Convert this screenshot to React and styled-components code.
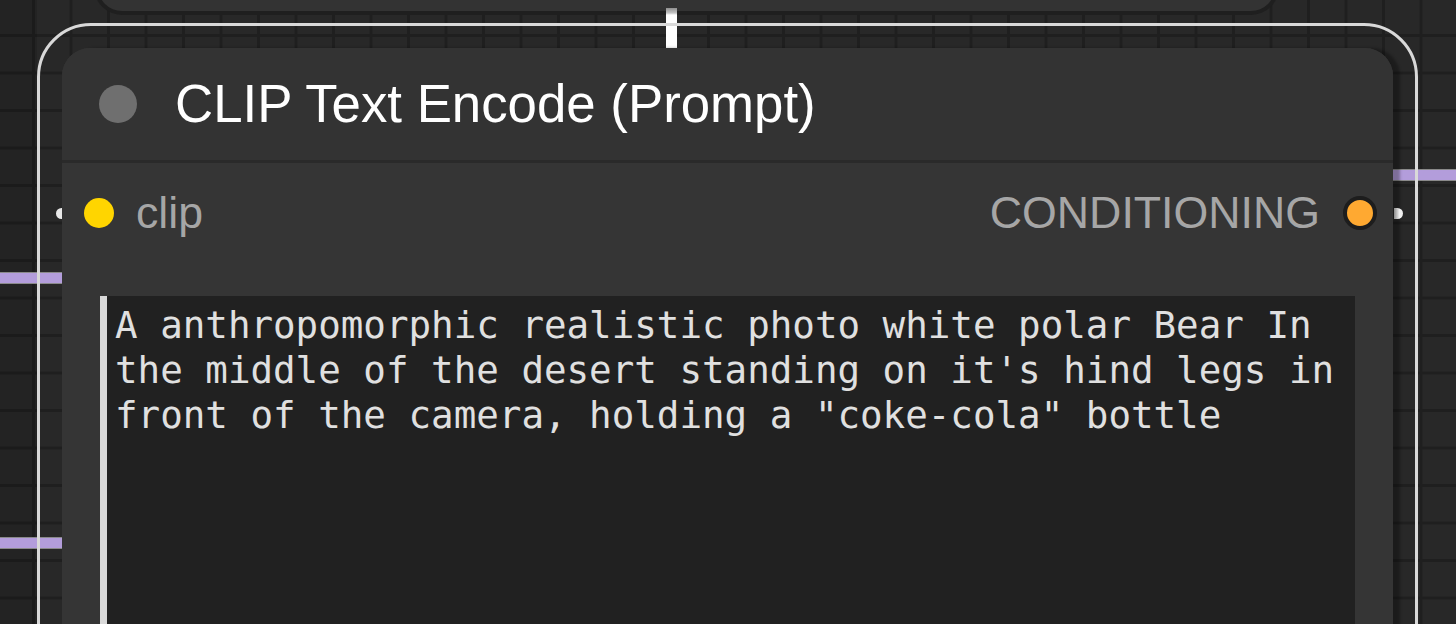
import React from "react";
import styled, { createGlobalStyle } from "styled-components";

const GlobalStyle = createGlobalStyle`
  html, body { margin: 0; padding: 0; background: #262626; }
  #root { width: 1456px; height: 624px; overflow: hidden; }
`;

const Canvas = styled.div`
  position: relative;
  width: 1456px;
  height: 624px;
  overflow: hidden;
  background-color: #282828;
  background-image:
    linear-gradient(to right, #1f1f1f 3px, transparent 3px),
    linear-gradient(to bottom, #1f1f1f 3px, transparent 3px);
  background-size: 37.5px 37.5px;
  background-position: 32px 34px;
`;

const LeftShade = styled.div`
  position: absolute;
  left: 0;
  top: 0;
  width: 37px;
  height: 624px;
  background: rgba(0, 0, 0, 0.12);
`;

const Link = styled.div`
  position: absolute;
  height: 10px;
  background: #b39ddb;
  border-top: 1px solid #8a8a8a;
  border-bottom: 1px solid #8a8a8a;
`;

const WireTop = styled.div`
  position: absolute;
  left: 666px;
  top: 8px;
  width: 11px;
  height: 40px;
  background: linear-gradient(to bottom, #8f8f8f 0px, #c4c4c4 5px, #ffffff 7px);
`;

const TopNode = styled.div`
  position: absolute;
  left: 98px;
  top: -60px;
  width: 1177px;
  height: 71px;
  border-radius: 24px;
  background: #333333;
  box-shadow: 0 0 0 4px #1f1f1f;
`;

const Outline = styled.div`
  position: absolute;
  left: 37px;
  top: 23px;
  width: 1375px;
  height: 700px;
  border: 3px solid #d9d9d9;
  border-radius: 54px;
  pointer-events: none;
`;

const Node = styled.div`
  position: absolute;
  left: 62px;
  top: 48px;
  width: 1331px;
  height: 660px;
  border-radius: 28px;
  background: #353535;
  box-shadow: 7px 0 3px rgba(0, 0, 0, 0.3);
  display: flex;
  flex-direction: column;
`;

const TitleBar = styled.div`
  height: 112px;
  display: flex;
  align-items: center;
  gap: 38px;
  padding-left: 37px;
  background: #333333;
  border-radius: 28px 28px 0 0;
  border-bottom: 3px solid #2a2a2a;
`;

const StatusDot = styled.div`
  width: 38px;
  height: 38px;
  border-radius: 50%;
  background: #6f6f6f;
  flex-shrink: 0;
`;

const Title = styled.div`
  font-family: "Liberation Sans", Arial, sans-serif;
  font-size: 52.8px;
  line-height: 1;
  color: #ffffff;
  white-space: nowrap;
`;

const SlotRow = styled.div`
  position: relative;
  height: 100px;
  display: flex;
  align-items: center;
  justify-content: space-between;
  padding: 0 16px 0 22px;
`;

const Slot = styled.div`
  display: flex;
  align-items: center;
  gap: ${(p) => p.$gap}px;
`;

const SlotDot = styled.div`
  box-sizing: border-box;
  width: ${(p) => p.$size}px;
  height: ${(p) => p.$size}px;
  border-radius: 50%;
  background: ${(p) => p.$color};
  border: ${(p) => (p.$ring ? "4px solid #1d1d1d" : "none")};
  flex-shrink: 0;
`;

const SlotLabel = styled.span`
  font-family: "Liberation Sans", Arial, sans-serif;
  font-size: 44.7px;
  line-height: 1;
  color: #a6a6a6;
`;

const LinkEnd = styled.div`
  position: absolute;
  top: 45px;
  width: 6px;
  height: 11px;
  background: #e8e8e8;
  ${(p) =>
    p.$side === "left"
      ? "left: -6px; border-radius: 6px 0 0 6px;"
      : "right: -10px; width: 9px; border-radius: 0 6px 6px 0; background: linear-gradient(to right, #8a8a8a, #f0f0f0 60%);"}
`;

const PromptArea = styled.textarea`
  display: block;
  box-sizing: border-box;
  margin: 33px 38px 0 38px;
  width: 1255px;
  height: 400px;
  padding: 7px 8px 0 8px;
  border: none;
  border-left: 7px solid #d9d9d9;
  border-radius: 0;
  background: #212121;
  color: #e0e0e0;
  font-family: "DejaVu Sans Mono", "Liberation Mono", monospace;
  font-size: 37.5px;
  line-height: 45px;
  resize: none;
  outline: none;
  overflow: hidden;
`;

const PROMPT =
  'A anthropomorphic realistic photo white polar Bear In the middle of the desert standing on it\'s hind legs in front of the camera, holding a "coke-cola" bottle';

export default function App() {
  return (
    <>
      <GlobalStyle />
      <Canvas>
        <LeftShade />
        <Link style={{ left: 0, top: 272, width: 70 }} />
        <Link style={{ left: 0, top: 537, width: 70 }} />
        <Link style={{ left: 1390, top: 169, width: 70 }} />
        <TopNode />
        <WireTop />
        <Outline />
        <Node>
          <TitleBar>
            <StatusDot />
            <Title>CLIP Text Encode (Prompt)</Title>
          </TitleBar>
          <SlotRow>
            <LinkEnd $side="left" />
            <Slot $gap={22}>
              <SlotDot $size={30} $color="#ffd500" />
              <SlotLabel>clip</SlotLabel>
            </Slot>
            <Slot $gap={23}>
              <SlotLabel>CONDITIONING</SlotLabel>
              <SlotDot $size={34} $color="#ffa931" $ring />
            </Slot>
            <LinkEnd $side="right" />
          </SlotRow>
          <PromptArea defaultValue={PROMPT} spellCheck={false} readOnly />
        </Node>
      </Canvas>
    </>
  );
}
